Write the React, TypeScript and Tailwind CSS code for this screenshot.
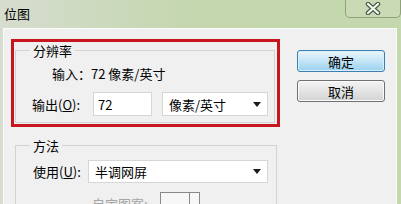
import React from "react";

const font = { fontFamily: '"Noto Sans CJK SC", "Liberation Sans", sans-serif' };

function Arrow() {
  return (
    <svg width="8" height="5" viewBox="0 0 8 5" className="shrink-0">
      <path d="M0 0 H8 L4 5 Z" fill="#1a1a1a" />
    </svg>
  );
}

function Select({ value, width }: { value: string; width: string }) {
  return (
    <div className={`${width} flex h-full items-center justify-between border border-[#d6d6d6] bg-white pl-[6px] pr-[6px]`}>
      <span>{value}</span>
      <Arrow />
    </div>
  );
}

export default function App() {
  return (
    <div className="relative h-[204px] w-[401px] overflow-hidden bg-gradient-to-r from-[#d6ddcf] via-[#c3d6ac] to-[#c4d8ae] text-[13px] leading-[17px] text-black" style={font}>
      {/* title bar */}
      <div className="flex h-[28px] items-start justify-between">
        <span className="pl-[4px] pt-[5px] text-[13px]">位图</span>
        <div className="flex h-[18px] w-[56px] items-center justify-center rounded-b-[5px] border border-t-0 border-[#8ea37a] bg-[#c9dab5]">
          <svg width="16" height="13" viewBox="0 0 16 13">
            <path d="M3 2 L13 11 M13 2 L3 11" stroke="#4a5a48" strokeWidth="4.5" strokeLinecap="round" />
            <path d="M3 2 L13 11 M13 2 L3 11" stroke="#f4f6f2" strokeWidth="2.2" strokeLinecap="round" />
          </svg>
        </div>
      </div>

      {/* body */}
      <div className="ml-[3px] mr-[4px] flex h-[176px] border-l border-r border-t border-[#fbfbfb] bg-[#f0f0f0] pl-[7px] pt-[10px]">
        <div className="w-[269px]">
          <div className="h-[88px] border-[3px] border-[#c8161e]">
            <fieldset className="ml-[1px] h-[81px] w-[260px] border border-[#d3d3d3]">
              <legend className="ml-[14px] px-[3px]">分辨率</legend>
              <div className="mt-[6px] pl-[36px]">输入：72 像素/英寸</div>
              <div className="mt-[10px] flex h-[24px] items-center pl-[16px]">
                <span className="w-[61px]">
                  输出(<span className="underline">O</span>):
                </span>
                <div className="flex h-full w-[59px] items-center border border-[#d6d6d6] bg-white pl-[4px]">72</div>
                <div className="ml-[10px] h-full">
                  <Select value="像素/英寸" width="w-[106px]" />
                </div>
              </div>
            </fieldset>
          </div>

          <fieldset className="ml-[4px] mt-[10px] h-[80px] w-[262px] border border-[#d3d3d3]">
            <legend className="ml-[14px] px-[3px]">方法</legend>
            <div className="mt-[6px] flex h-[23px] items-center pl-[17px]">
              <span className="w-[55px]">
                使用(<span className="underline">U</span>):
              </span>
              <div className="h-full">
                <Select value="半调网屏" width="w-[180px]" />
              </div>
            </div>
            <div className="mt-[9px] flex items-start pl-[76px]">
              <span className="mt-[3px] w-[68px] text-[#a6a6a6]">自定图案:</span>
              <div className="flex h-[24px] w-[40px] border border-[#8a8a8a] bg-[#f7f7f7]">
                <div className="w-[29px] border-r border-[#8a8a8a]" />
              </div>
            </div>
          </fieldset>
        </div>

        <div className="ml-[17px] mt-[11px] flex flex-col gap-[8px]">
          <button className="flex h-[22px] w-[88px] items-center justify-center rounded-[3px] border border-[#3c7fb1] bg-gradient-to-b from-[#eaf6fd] via-[#c4e5f6] to-[#98d1ef] text-[13px] shadow-[inset_0_0_0_1px_#d9f0fc]">
            确定
          </button>
          <button className="flex h-[22px] w-[88px] items-center justify-center rounded-[3px] border border-[#707070] bg-gradient-to-b from-[#f4f4f4] via-[#e4e4e4] to-[#d2d2d2] text-[13px] shadow-[inset_0_0_0_1px_#fbfbfb]">
            取消
          </button>
        </div>
      </div>
    </div>
  );
}
